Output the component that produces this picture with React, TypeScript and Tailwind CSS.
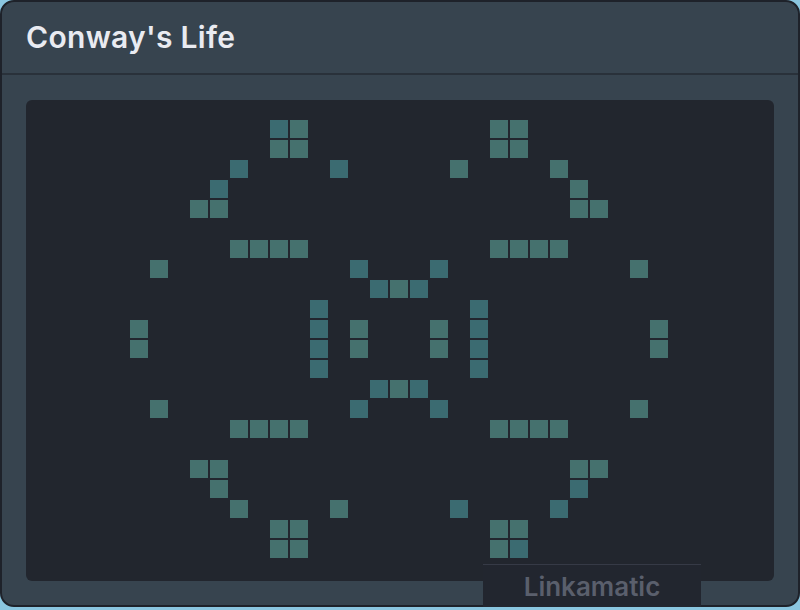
import React from "react";

const COLS = 37;
const ROWS = 24;

const alive: [number, number][] = [];
const add = (r: number, cs: number[]) => cs.forEach((c) => alive.push([r, c]));
add(1, [12, 13, 23, 24]);
add(2, [12, 13, 23, 24]);
add(3, [10, 15, 21, 26]);
add(4, [9, 27]);
add(5, [8, 9, 27, 28]);
add(7, [10, 11, 12, 13, 23, 24, 25, 26]);
add(8, [6, 16, 20, 30]);
add(9, [17, 18, 19]);
add(10, [14, 22]);
add(11, [5, 14, 16, 20, 22, 31]);
add(12, [5, 14, 16, 20, 22, 31]);
add(13, [14, 22]);
add(14, [17, 18, 19]);
add(15, [6, 16, 20, 30]);
add(16, [10, 11, 12, 13, 23, 24, 25, 26]);
add(18, [8, 9, 27, 28]);
add(19, [9, 27]);
add(20, [10, 15, 21, 26]);
add(21, [12, 13, 23, 24]);
add(22, [12, 13, 23, 24]);

const blueSet = new Set<string>([
  "1-12", "22-24", "3-15", "4-9", "8-16", "8-20", "9-17", "9-19",
  "10-14", "11-14", "12-14", "13-14", "10-22", "11-22", "12-22", "13-22",
  "14-17", "14-19", "15-16", "15-20", "20-21", "19-27", "3-10", "20-26",
]);

const aliveSet = new Set(alive.map(([r, c]) => `${r}-${c}`));

export default function App() {
  const cells: React.ReactNode[] = [];
  for (let r = 0; r < ROWS; r++) {
    for (let c = 0; c < COLS; c++) {
      const key = `${r}-${c}`;
      const on = aliveSet.has(key);
      const blue = blueSet.has(key);
      cells.push(
        <div
          key={key}
          className={
            on ? (blue ? "bg-[#3b6b71]" : "bg-[#45716e]") : "bg-transparent"
          }
        />
      );
    }
  }
  return (
    <div className="min-h-[610px] w-[800px] bg-[#8ac6e0]">
      <div className="relative flex h-[607px] w-[800px] flex-col rounded-[14px] border-2 border-[#1e222a] bg-[#37444f]">
        <header className="flex h-[73px] shrink-0 items-center border-b-2 border-[#29313a] pl-[24px]">
          <h1
            className="text-[30px] font-semibold tracking-[0.3px] text-[#e9ebf1]"
            style={{ fontFamily: "Inter, 'Noto Sans', sans-serif" }}
          >
            Conway's Life
          </h1>
        </header>
        <main className="px-[24px] pt-[25px]">
          <div className="h-[481px] w-[748px] rounded-[6px] bg-[#22262e] pl-[4px]">
            <div className="grid grid-cols-[repeat(37,18px)] grid-rows-[repeat(24,18px)] gap-[2px]">
              {cells}
            </div>
          </div>
        </main>
        <div className="absolute bottom-[-2px] left-[481px] flex h-[43px] w-[218px] items-center justify-center border-t border-[#363a46] bg-[#22262f]">
          <span
            className="text-[26px] font-semibold text-[#5a5f6c]"
            style={{ fontFamily: "Inter, 'Noto Sans', sans-serif" }}
          >
            Linkamatic
          </span>
        </div>
      </div>
    </div>
  );
}
